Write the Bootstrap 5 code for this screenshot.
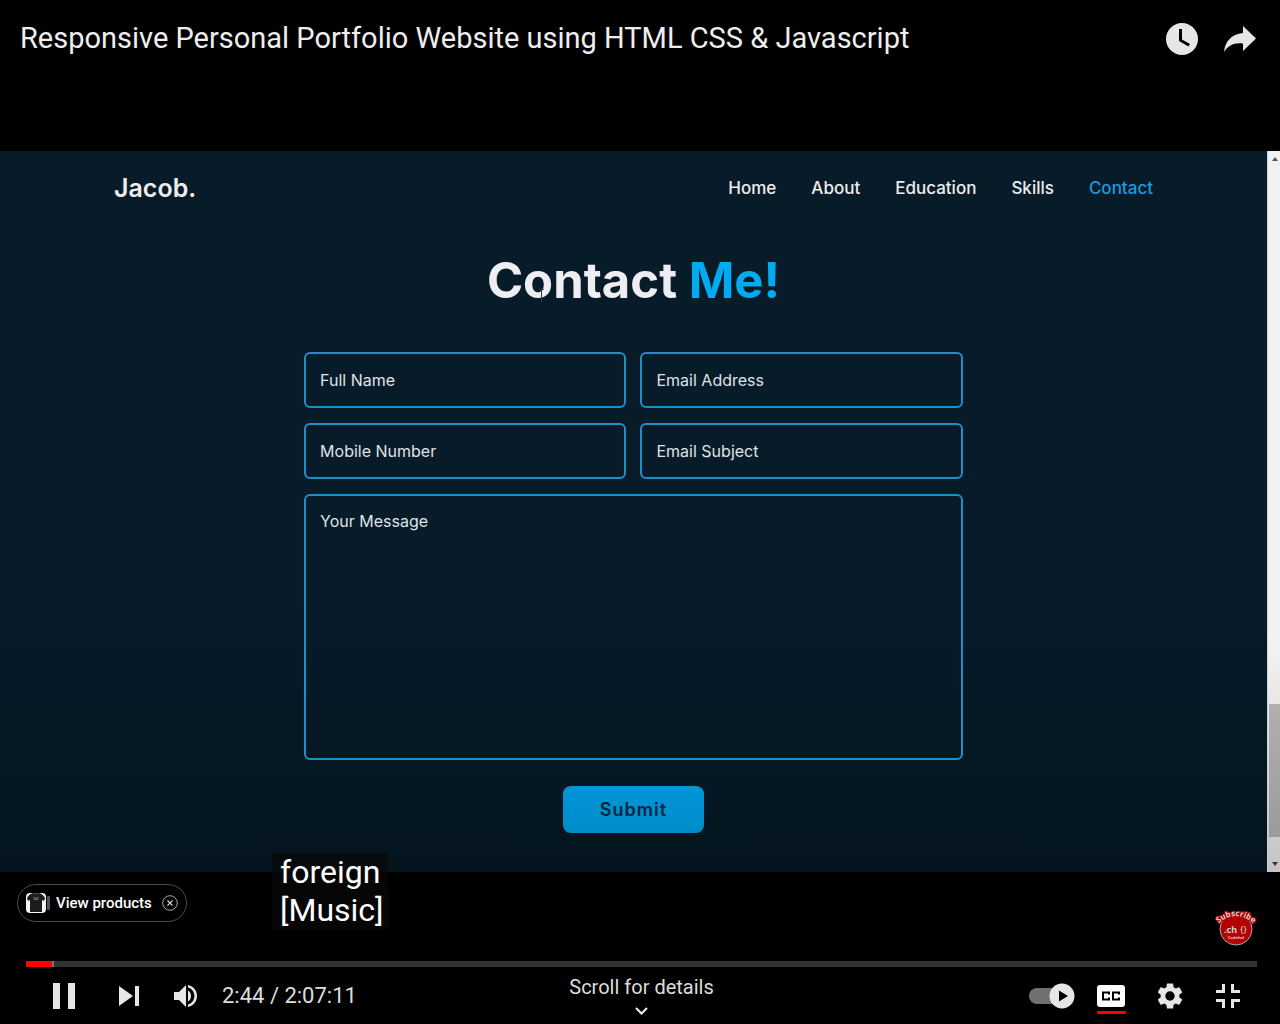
<!DOCTYPE html>
<html lang="en">
<head>
<meta charset="utf-8">
<meta name="viewport" content="width=device-width, initial-scale=1">
<title>Responsive Personal Portfolio Website using HTML CSS &amp; Javascript</title>
<link href="https://cdn.jsdelivr.net/npm/bootstrap@5.3.0/dist/css/bootstrap.min.css" rel="stylesheet">
<style>
body { background: #000; color: #eee; font-family: Roboto, sans-serif; }
.player { min-height: 100vh; }
.icon-btn { display: flex; align-items: center; justify-content: center; padding: 0; border: 0; background: none; color: #e6e6e6; }
.icon-btn svg, .chip svg { display: block; fill: currentColor; }
.title-bar { padding: 16px 20px 0; height: 151px; }
.title-bar h1 { font-size: 29px; line-height: 44px; font-weight: 400; margin: 0; }
.title-bar .icon-btn { width: 58px; height: 46px; }
.title-actions { margin-right: -9px; }
.stage { position: relative; flex: 1 1 auto; background: linear-gradient(#081b29 0%, #081b29 60%, #04151f 100%); font-family: Inter, sans-serif; }
.site-nav { padding: 21px 9% 0; }
.site-brand { font-size: 25px; line-height: 32px; font-weight: 600; color: #ededed; text-decoration: none; }
.site-links { gap: 35px; }
.site-links a { font-size: 17px; line-height: 32px; font-weight: 500; color: #ededed; text-decoration: none; }
.site-links a.current { color: #1a9be0; }
.contact-title { font-size: 49px; line-height: 60px; font-weight: 700; color: #ededf2; margin: 47px 0 41px; text-align: center; }
.contact-title span { color: #00abf0; }
.contact-form { width: 52%; min-width: 300px; margin: 0 auto; }
.field-grid { --bs-gutter-x: 14px; --bs-gutter-y: 15px; }
.contact-form .form-control { background: transparent; border: 2px solid #1f8fc8; border-radius: 6px; color: #ededed; font-size: 16px; line-height: 24px; padding: 13px 14px; box-shadow: none; }
.contact-form .form-control::placeholder { color: #dfe3e8; opacity: 1; }
.contact-form input.form-control { height: 56px; }
.contact-form textarea.form-control { height: 266px; resize: none; }
.send-row { margin-top: 26px; }
.send-btn { background: linear-gradient(#0096d8, #008bc9); color: #06263d; border: 0; border-radius: 8px; width: 141px; height: 47px; font-size: 18px; line-height: 24px; font-weight: 600; letter-spacing: 1px; }
.text-cursor { position: absolute; left: 42%; top: 137px; }
.scroll-rail { flex: 0 0 13px; background: linear-gradient(#f1f1f1 0%, #f1f1f1 70%, #c4c4c4 100%); border-left: 1px solid #c9d2d9; padding: 6px 0 6px; }
.scroll-rail svg { display: block; margin: 0 0 0 4px; }
.scroll-thumb { height: 133px; margin: 0 0 25px 1px; background: linear-gradient(#b0b0b0, #9b9b9b); }
.captions { position: absolute; left: 272px; bottom: -57px; font: 400 32px/38px Roboto, sans-serif; color: #fff; z-index: 2; }
.captions span { display: table; background: rgba(8, 8, 8, .75); padding: 0 8px; }
.captions span + span { padding-right: 5px; }
.lower { padding: 12px 26px 0 17px; height: 89px; }
.chip { height: 38px; border: 1px solid #4a4a4a; border-radius: 19px; padding: 0 8px; background: #000; gap: 6px; font-size: 15px; font-weight: 500; color: #fff; }
.brand-mark { margin: 24px -1px 0 0; padding: 0; border: 0; background: none; }
.brand-mark svg { display: block; overflow: visible; }
.seek { margin: 0 23px 0 26px; height: 6px; background: #333; border-radius: 0; }
.seek .progress-bar { background: #f00; border-right: 2px solid #777; }
.controls { padding: 0 23px 0 26px; height: 57px; }
.control-side { flex: 1 1 0; }
.controls .icon-btn { width: 58px; height: 48px; }
.controls .pause-btn { width: 76px; }
.controls .next-btn { width: 54px; }
.controls .vol-btn { width: 60px; }
.controls .auto-btn { width: 62px; }
.clock { font-size: 22px; line-height: 28px; color: #ddd; padding-left: 6px; }
.details-btn { flex-direction: column; font-size: 20px; line-height: 24px; color: #ddd; padding: 0 0 2px; border: 0; background: none; }
</style>
</head>
<body>
<main class="player d-flex flex-column">
  <header class="title-bar d-flex justify-content-between align-items-start">
    <h1>Responsive Personal Portfolio Website using HTML CSS &amp; Javascript</h1>
    <div class="title-actions d-flex">
      <button class="icon-btn" type="button" aria-label="Watch later"><svg width="34" height="34" viewBox="0 0 34 34"><path fill-rule="evenodd" d="M17 1a16 16 0 1 0 0 32 16 16 0 0 0 0-32zM14 7h3v10.500l8 4.500-1.500 2.500L14 19z"/></svg></button>
      <button class="icon-btn" type="button" aria-label="Share"><svg width="34" height="28" viewBox="0 0 34 28"><path d="M20 1l13 12.500L20 26v-7.500C11 17.500 5 20.500 1 27 2 17 8 9 20 8z"/></svg></button>
    </div>
  </header>

  <section class="stage d-flex">
    <div class="flex-grow-1">
      <nav class="site-nav d-flex justify-content-between">
        <a class="site-brand" href="#">Jacob.</a>
        <div class="site-links d-flex">
          <a href="#">Home</a><a href="#">About</a><a href="#">Education</a><a href="#">Skills</a><a class="current" href="#">Contact</a>
        </div>
      </nav>
      <h2 class="contact-title">Contact <span>Me!</span></h2>
      <form class="contact-form">
        <div class="row field-grid">
          <div class="col-6"><input class="form-control" type="text" placeholder="Full Name" aria-label="Full Name"></div>
          <div class="col-6"><input class="form-control" type="email" placeholder="Email Address" aria-label="Email Address"></div>
          <div class="col-6"><input class="form-control" type="tel" placeholder="Mobile Number" aria-label="Mobile Number"></div>
          <div class="col-6"><input class="form-control" type="text" placeholder="Email Subject" aria-label="Email Subject"></div>
          <div class="col-12"><textarea class="form-control d-block" placeholder="Your Message" aria-label="Your Message"></textarea></div>
        </div>
        <div class="send-row text-center"><button class="send-btn" type="button">Submit</button></div>
      </form>
    </div>
    <div class="scroll-rail d-flex flex-column" aria-hidden="true">
      <svg width="6" height="4" viewBox="0 0 6 4"><path d="M0 4L3 0l3 4z" fill="#555"/></svg>
      <div class="scroll-thumb mt-auto"></div>
      <svg width="6" height="4" viewBox="0 0 6 4"><path d="M0 0h6L3 4z" fill="#333"/></svg>
    </div>
    <svg class="text-cursor" width="7" height="16" viewBox="0 0 7 16" aria-hidden="true"><path d="M1 1.500h5M3.500 2v12" fill="none" stroke="#2c3a44"/></svg>
    <div class="captions"><span>foreign</span><span>[Music]</span></div>
  </section>

  <div class="lower d-flex justify-content-between align-items-start">
    <button class="chip d-flex align-items-center" type="button">
      <svg width="24" height="20" viewBox="0 0 24 20"><rect width="20" height="20" rx="4" fill="#f4f4f4"/><path d="M1 5Q3 1 7 0h6q4 1 6 5l-1 3-2-1v12H4V7L2 8z" fill="#1c1c1e"/><path d="M7 0q3 2 6 0" fill="none" stroke="#555"/><path d="M7 5h6M8 6.500h4" stroke="#777"/><rect x="21" y="3" width="3" height="14" rx="1" fill="#555"/></svg>
      <span>View products</span>
      <svg class="ms-1" width="16" height="16" viewBox="0 0 16 16"><circle cx="8" cy="8" r="7.300" fill="none" stroke="#aaa"/><path d="M5.500 5.500l5 5m0-5l-5 5" stroke="#ccc" stroke-width="1.300"/></svg>
    </button>
    <button class="brand-mark" type="button" aria-label="Subscribe">
      <svg width="38" height="38" viewBox="0 0 38 38">
        <circle cx="19" cy="21" r="16" fill="#b40000" stroke="#aaa"/>
        <path id="arc" d="M2 15Q19 1 36 15" fill="none"/>
        <g font-family="Noto Sans, sans-serif" font-weight="700" fill="#d0d0d0">
          <text font-size="8" text-anchor="middle" stroke="#b40000" stroke-width="2" paint-order="stroke"><textPath href="#arc" startOffset="50%">Subscribe</textPath></text>
          <text x="7" y="25" font-size="9">.ch</text><text x="23" y="25" font-size="9" font-weight="400">{}</text>
          <text x="19" y="31" font-size="4" text-anchor="middle">Codehal</text>
        </g>
      </svg>
    </button>
  </div>

  <div class="seek progress" role="progressbar" aria-label="Seek" aria-valuenow="2" aria-valuemin="0" aria-valuemax="100"><div class="progress-bar" style="width:2.300%"></div></div>

  <div class="controls d-flex align-items-center">
    <div class="control-side d-flex align-items-center">
      <button class="icon-btn pause-btn" type="button" aria-label="Pause"><svg width="22" height="26" viewBox="0 0 22 26"><path d="M0 0h7v26H0zM15 0h7v26h-7z"/></svg></button>
      <button class="icon-btn next-btn" type="button" aria-label="Next"><svg width="20" height="20" viewBox="0 0 20 20"><path d="M0 0l14 10L0 20zM16 0h4v20h-4z"/></svg></button>
      <button class="icon-btn vol-btn" type="button" aria-label="Mute"><svg width="24" height="22" viewBox="0 0 24 22"><path d="M0 7h5l7-7v22l-7-7H0zM14 5.500c4 2 4 9 0 11zM14 0c12 2.500 12 19.500 0 22v-2.500c8.500-2.500 8.500-14.500 0-17z"/></svg></button>
      <span class="clock">2:44 / 2:07:11</span>
    </div>
    <button class="details-btn d-flex align-items-center" type="button"><span>Scroll for details</span>
      <svg class="mt-2" width="13" height="8" viewBox="0 0 13 8"><path d="M1 1l5.500 5.500L12 1" fill="none" stroke="#eee" stroke-width="2"/></svg></button>
    <div class="control-side d-flex justify-content-end">
      <button class="icon-btn auto-btn" type="button" aria-label="Autoplay"><svg width="46" height="26" viewBox="0 0 46 26"><rect y="5" width="40" height="16" rx="8" fill="#717171"/><circle cx="33" cy="13" r="12.500"/><path d="M30 7.500l9 5.500-9 5.500z" fill="#000"/></svg></button>
      <button class="icon-btn" type="button" aria-label="Subtitles"><svg width="30" height="36" viewBox="0 0 30 36"><rect x="0" y="7" width="28" height="22" rx="3" fill="#fff"/><path d="M12 16.500v-2H6v7h6v-2M22 16.500v-2h-6v7h6v-2" fill="none" stroke="#000" stroke-width="2"/><rect y="33" width="29" height="3" rx="1" fill="#f00"/></svg></button>
      <button class="icon-btn" type="button" aria-label="Settings"><svg width="26" height="26" viewBox="2 2 20 20"><path d="M19.140 12.940c.04-.3.060-.61.060-.94 0-.32-.02-.64-.07-.94l2.030-1.580c.18-.14.230-.41.120-.61l-1.920-3.320c-.12-.22-.37-.29-.59-.22l-2.390.96c-.5-.38-1.030-.7-1.620-.94l-.36-2.540c-.04-.24-.24-.41-.48-.41h-3.840c-.24 0-.43.17-.47.410l-.36 2.540c-.59.24-1.130.57-1.620.94l-2.390-.96c-.22-.08-.47 0-.59.220L2.740 8.870c-.12.21-.08.47.120.610l2.030 1.580c-.05.3-.09.630-.09.940s.02.640.070.940l-2.030 1.580c-.18.14-.23.410-.12.610l1.920 3.320c.12.220.370.290.590.220l2.390-.96c.5.380 1.030.700 1.620.940l.36 2.540c.05.240.240.410.480.410h3.840c.24 0 .44-.17.470-.41l.36-2.540c.59-.24 1.130-.56 1.620-.94l2.390.960c.22.080.470 0 .590-.22l1.920-3.320c.12-.22.070-.47-.12-.61zM12 15.600a3.600 3.600 0 1 1 0-7.200 3.600 3.600 0 0 1 0 7.200z"/></svg></button>
      <button class="icon-btn" type="button" aria-label="Exit full screen"><svg width="24" height="24" viewBox="0 0 24 24"><path d="M6 0h3v9H0V6h6zM15 0h3v6h6v3h-9zM0 15h9v9H6v-6H0zM15 15h9v3h-6v6h-3z"/></svg></button>
    </div>
  </div>
</main>
<script src="https://cdn.jsdelivr.net/npm/bootstrap@5.3.0/dist/js/bootstrap.bundle.min.js"></script>
</body>
</html>
